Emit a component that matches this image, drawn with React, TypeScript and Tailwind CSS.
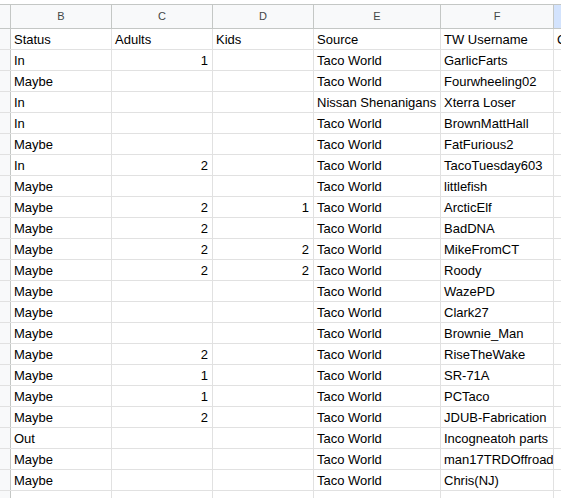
import React from 'react';

type Row = [string, string, string, string, string];

const rows: Row[] = [
  ['Status', 'Adults', 'Kids', 'Source', 'TW Username'],
  ['In', '1', '', 'Taco World', 'GarlicFarts'],
  ['Maybe', '', '', 'Taco World', 'Fourwheeling02'],
  ['In', '', '', 'Nissan Shenanigans', 'Xterra Loser'],
  ['In', '', '', 'Taco World', 'BrownMattHall'],
  ['Maybe', '', '', 'Taco World', 'FatFurious2'],
  ['In', '2', '', 'Taco World', 'TacoTuesday603'],
  ['Maybe', '', '', 'Taco World', 'littlefish'],
  ['Maybe', '2', '1', 'Taco World', 'ArcticElf'],
  ['Maybe', '2', '', 'Taco World', 'BadDNA'],
  ['Maybe', '2', '2', 'Taco World', 'MikeFromCT'],
  ['Maybe', '2', '2', 'Taco World', 'Roody'],
  ['Maybe', '', '', 'Taco World', 'WazePD'],
  ['Maybe', '', '', 'Taco World', 'Clark27'],
  ['Maybe', '', '', 'Taco World', 'Brownie_Man'],
  ['Maybe', '2', '', 'Taco World', 'RiseTheWake'],
  ['Maybe', '1', '', 'Taco World', 'SR-71A'],
  ['Maybe', '1', '', 'Taco World', 'PCTaco'],
  ['Maybe', '2', '', 'Taco World', 'JDUB-Fabrication'],
  ['Out', '', '', 'Taco World', 'Incogneatoh parts'],
  ['Maybe', '', '', 'Taco World', 'man17TRDOffroad'],
  ['Maybe', '', '', 'Taco World', 'Chris(NJ)'],
];

const cols = ['B', 'C', 'D', 'E', 'F'];
// widths include the right gridline
const widths = ['w-[101px]', 'w-[101px]', 'w-[101px]', 'w-[127px]', 'w-[113px]'];

const isNum = (v: string) => /^\d+$/.test(v);

const App = () => {
  return (
    <div className="w-[561px] h-[498px] overflow-hidden bg-white font-['Liberation_Sans',Arial,sans-serif] text-black">
      <div className="h-[4px] bg-white" />
      {/* column headers */}
      <div className="flex h-[25px] border-t border-b border-[#c4c7c5] bg-[#f8f9fa]">
        <div className="w-[11px] shrink-0 border-r border-[#c4c7c5]" />
        {cols.map((c, i) => (
          <div
            key={c}
            className={`${widths[i]} shrink-0 border-r border-[#c4c7c5] flex items-center justify-center text-[11px] text-[#444746]`}
          >
            {c}
          </div>
        ))}
        {/* selected column G, mostly off screen */}
        <div className="flex-1 bg-[#d3e3fd]" />
      </div>

      {rows.map((r, ri) => (
        <div key={ri} className="flex h-[21px] border-b border-[#e1e1e1]">
          <div className="w-[11px] shrink-0 border-r border-[#c4c7c5] bg-[#f8f9fa]" />
          {r.map((v, ci) => (
            <div
              key={ci}
              className={`${widths[ci]} shrink-0 border-r border-[#e1e1e1] flex items-end pb-[1px] text-[13px] leading-[16px] whitespace-nowrap overflow-hidden ${
                isNum(v) ? 'justify-end pr-[4px]' : 'pl-[3px]'
              }`}
            >
              {v}
            </div>
          ))}
          <div className="flex-1 flex items-end pb-[1px] pl-[3px] text-[13px] leading-[16px] whitespace-nowrap overflow-hidden">
            {ri === 0 ? 'C' : ''}
          </div>
        </div>
      ))}
      <div className="flex h-[30px]">
        <div className="w-[11px] shrink-0 border-r border-[#c4c7c5] bg-[#f8f9fa]" />
        {widths.map((w, i) => (
          <div key={i} className={`${w} shrink-0 border-r border-[#e1e1e1]`} />
        ))}
      </div>
    </div>
  );
};

export default App;
